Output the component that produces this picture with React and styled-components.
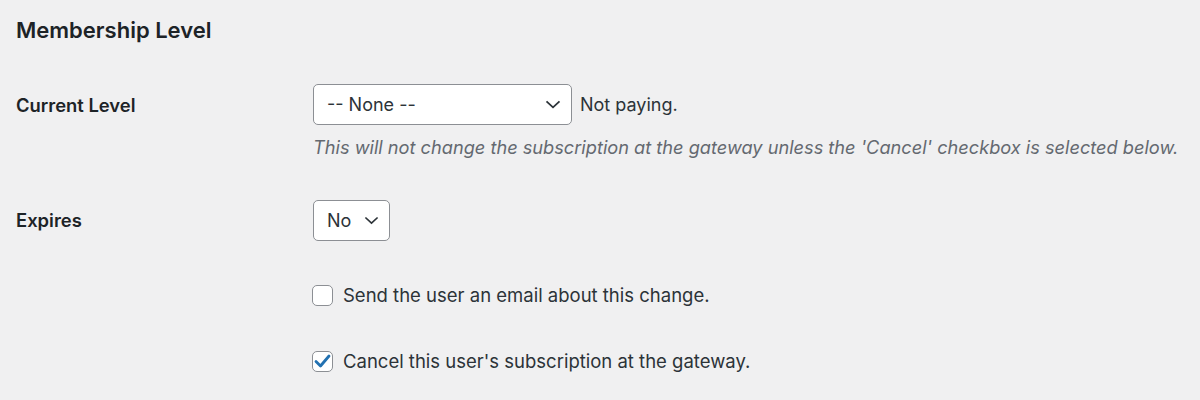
import React from "react";
import styled, { createGlobalStyle } from "styled-components";

const Global = createGlobalStyle`
  html, body { margin: 0; padding: 0; background: #f0f0f1; }
  body { font-family: Inter, "Noto Sans", sans-serif; color: #1d2327; }
  * { box-sizing: border-box; }
`;

const Page = styled.div`
  padding: 16px 16px 0 16px;
  width: 1200px;
  height: 400px;
  overflow: hidden;
`;

const Title = styled.h2`
  margin: 0;
  font-size: 22px;
  font-weight: 600;
  line-height: 28px;
`;

const Table = styled.div`
  display: grid;
  grid-template-columns: 297px 1fr;
  margin-top: 40px;
`;

const Label = styled.div`
  font-size: 18.4px;
  font-weight: 600;
  padding-top: ${(p) => p.$pt || 0}px;
  line-height: 24px;
`;

const Field = styled.div`
  display: flex;
  flex-direction: column;
  padding-bottom: ${(p) => p.$pb || 0}px;
`;

const Inline = styled.div`
  display: flex;
  align-items: center;
  gap: 8px;
`;

const SelectBox = styled.div`
  width: ${(p) => p.$w}px;
  height: 41px;
  background: #fff;
  border: 1px solid #8c8f94;
  border-radius: 5px;
  display: flex;
  align-items: center;
  justify-content: space-between;
  padding: 0 10px 0 13px;
  font-size: 18px;
  color: #2c3338;
`;

const Text = styled.span`
  font-size: 18px;
  color: #2c3338;
`;

const Desc = styled.p`
  margin: 10px 0 0;
  font-size: 18.2px;
  font-style: italic;
  color: #646970;
  line-height: 24px;
`;

const CheckRow = styled.label`
  display: flex;
  align-items: center;
  gap: 10px;
  font-size: 18.5px;
  color: #2c3338;
  margin-top: ${(p) => p.$mt || 0}px;
  margin-left: -1px;
`;

const Box = styled.span`
  width: 21px;
  height: 21px;
  border: 1px solid #8c8f94;
  border-radius: 5px;
  background: #fff;
  display: inline-flex;
  align-items: center;
  justify-content: center;
`;

const Chevron = ({ w = 16 }) => (
  <svg width={w} height="9" viewBox="0 0 16 9" fill="none">
    <path d="M1.5 1.3 L8 7.3 L14.5 1.3" stroke="#2c3338" strokeWidth="1.8" />
  </svg>
);

const Check = () => (
  <svg width="17" height="15" viewBox="0 0 17 15" fill="none">
    <path d="M2 7.5 L6.5 12 L15 2" stroke="#2271b1" strokeWidth="2.8" strokeLinecap="round" strokeLinejoin="round" />
  </svg>
);

export default function App() {
  return (
    <>
      <Global />
      <Page>
        <Title>Membership Level</Title>
        <Table>
          <Label $pt={9}>Current Level</Label>
          <Field $pb={41}>
            <Inline>
              <SelectBox $w={259}>
                <span>-- None --</span>
                <Chevron />
              </SelectBox>
              <Text>Not paying.</Text>
            </Inline>
            <Desc>This will not change the subscription at the gateway unless the 'Cancel' checkbox is selected below.</Desc>
          </Field>
          <Label $pt={8}>Expires</Label>
          <Field>
            <SelectBox $w={77}>
              <span>No</span>
              <Chevron w={15} />
            </SelectBox>
          </Field>
          <div />
          <Field>
            <CheckRow $mt={43}>
              <Box />
              Send the user an email about this change.
            </CheckRow>
            <CheckRow $mt={44}>
              <Box>
                <Check />
              </Box>
              Cancel this user's subscription at the gateway.
            </CheckRow>
          </Field>
        </Table>
      </Page>
    </>
  );
}
